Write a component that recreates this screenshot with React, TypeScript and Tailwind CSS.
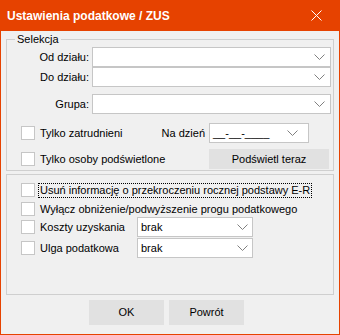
import React from 'react';

const Chevron = ({ className = '' }: { className?: string }) => (
	<svg width="11" height="6" viewBox="0 0 11 6" className={className}>
		<polyline points="0.5,0.5 5.5,5.5 10.5,0.5" fill="none" stroke="#808080" strokeWidth="1" />
	</svg>
);

const Combo = ({ className = '', text = '', chevronClass = 'mr-[5px]' }: { className?: string; text?: string; chevronClass?: string }) => (
	<div className={`h-[20px] bg-white border border-[#c6c6c6] flex items-center justify-between ${className}`}>
		<span className="pl-[3px] text-black">{text}</span>
		<Chevron className={chevronClass} />
	</div>
);

const Check = ({ label, focused = false }: { label: string; focused?: boolean }) => (
	<div className="flex items-center">
		<div className="w-[14px] h-[14px] bg-white border border-[#c6c6c6] shrink-0" />
		<span
			className={`ml-[3px] px-[1px] leading-[13px] whitespace-nowrap border border-dotted ${
				focused ? 'border-black' : 'border-transparent'
			}`}>
			{label}
		</span>
	</div>
);

const Button = ({ label, className = '' }: { label: string; className?: string }) => (
	<button type="button" className={`bg-[#e1e1e1] text-black flex items-center justify-center ${className}`}>
		{label}
	</button>
);

const App = () => {
	return (
		<div className="w-[340px] h-[335px] bg-[#e64200] flex flex-col font-['Liberation_Sans',Arial,sans-serif] text-[11px] text-black">
			<div className="h-[31px] shrink-0 flex items-center justify-between pl-[7px] pr-[18px]">
				<span className="text-white font-bold text-[12px]">Ustawienia podatkowe / ZUS</span>
				<svg width="11" height="11" viewBox="0 0 11 11">
					<path d="M0.5 0.5 L10.5 10.5 M10.5 0.5 L0.5 10.5" stroke="#ffffff" strokeWidth="1" />
				</svg>
			</div>
			<div className="flex-1 mx-px mb-px bg-[#f0f0f0] flex flex-col px-[5px]">
				<fieldset className="h-[140px] w-[328px] border border-[#cfcfcf] flex flex-col">
					<legend className="ml-[8px] px-[2px] leading-[16px]">Selekcja</legend>
					<div className="flex items-center">
						<span className="w-[82px] text-right">Od działu:</span>
						<Combo className="ml-[3px] w-[239px]" />
					</div>
					<div className="flex items-center">
						<span className="w-[82px] text-right">Do działu:</span>
						<Combo className="ml-[3px] w-[239px]" />
					</div>
					<div className="flex items-center mt-[7px]">
						<span className="w-[82px] text-right">Grupa:</span>
						<Combo className="ml-[3px] w-[239px]" />
					</div>
					<div className="flex items-center mt-[9px] pl-[14px] h-[20px]">
						<div className="w-[129px]">
							<Check label="Tylko zatrudnieni" />
						</div>
						<span className="w-[55px] text-right">Na dzień</span>
						<Combo className="ml-[4px] w-[100px]" text="__-__-____" chevronClass="mr-[10px]" />
					</div>
					<div className="flex items-center mt-[6px] pl-[14px] h-[20px]">
						<div className="w-[188px]">
							<Check label="Tylko osoby podświetlone" />
						</div>
						<Button label="Podświetl teraz" className="w-[120px] h-[20px]" />
					</div>
				</fieldset>
				<fieldset className="mt-[3px] h-[121px] w-[328px] border border-[#cfcfcf] flex flex-col pl-[14px]">
					<div className="mt-[7px] h-[16px] flex items-center">
						<Check label="Usuń informację o przekroczeniu rocznej podstawy E-R" focused />
					</div>
					<div className="mt-[3px] h-[16px] flex items-center">
						<Check label="Wyłącz obniżenie/podwyższenie progu podatkowego" />
					</div>
					<div className="h-[20px] flex items-center">
						<div className="w-[116px]">
							<Check label="Koszty uzyskania" />
						</div>
						<Combo className="w-[116px]" text="brak" chevronClass="mr-[4px]" />
					</div>
					<div className="mt-px h-[20px] flex items-center">
						<div className="w-[116px]">
							<Check label="Ulga podatkowa" />
						</div>
						<Combo className="w-[116px]" text="brak" chevronClass="mr-[4px]" />
					</div>
				</fieldset>
				<div className="mt-[5px] ml-[83px] flex gap-[5px]">
					<Button label="OK" className="w-[75px] h-[25px]" />
					<Button label="Powrót" className="w-[75px] h-[25px]" />
				</div>
			</div>
		</div>
	);
};

export default App;
